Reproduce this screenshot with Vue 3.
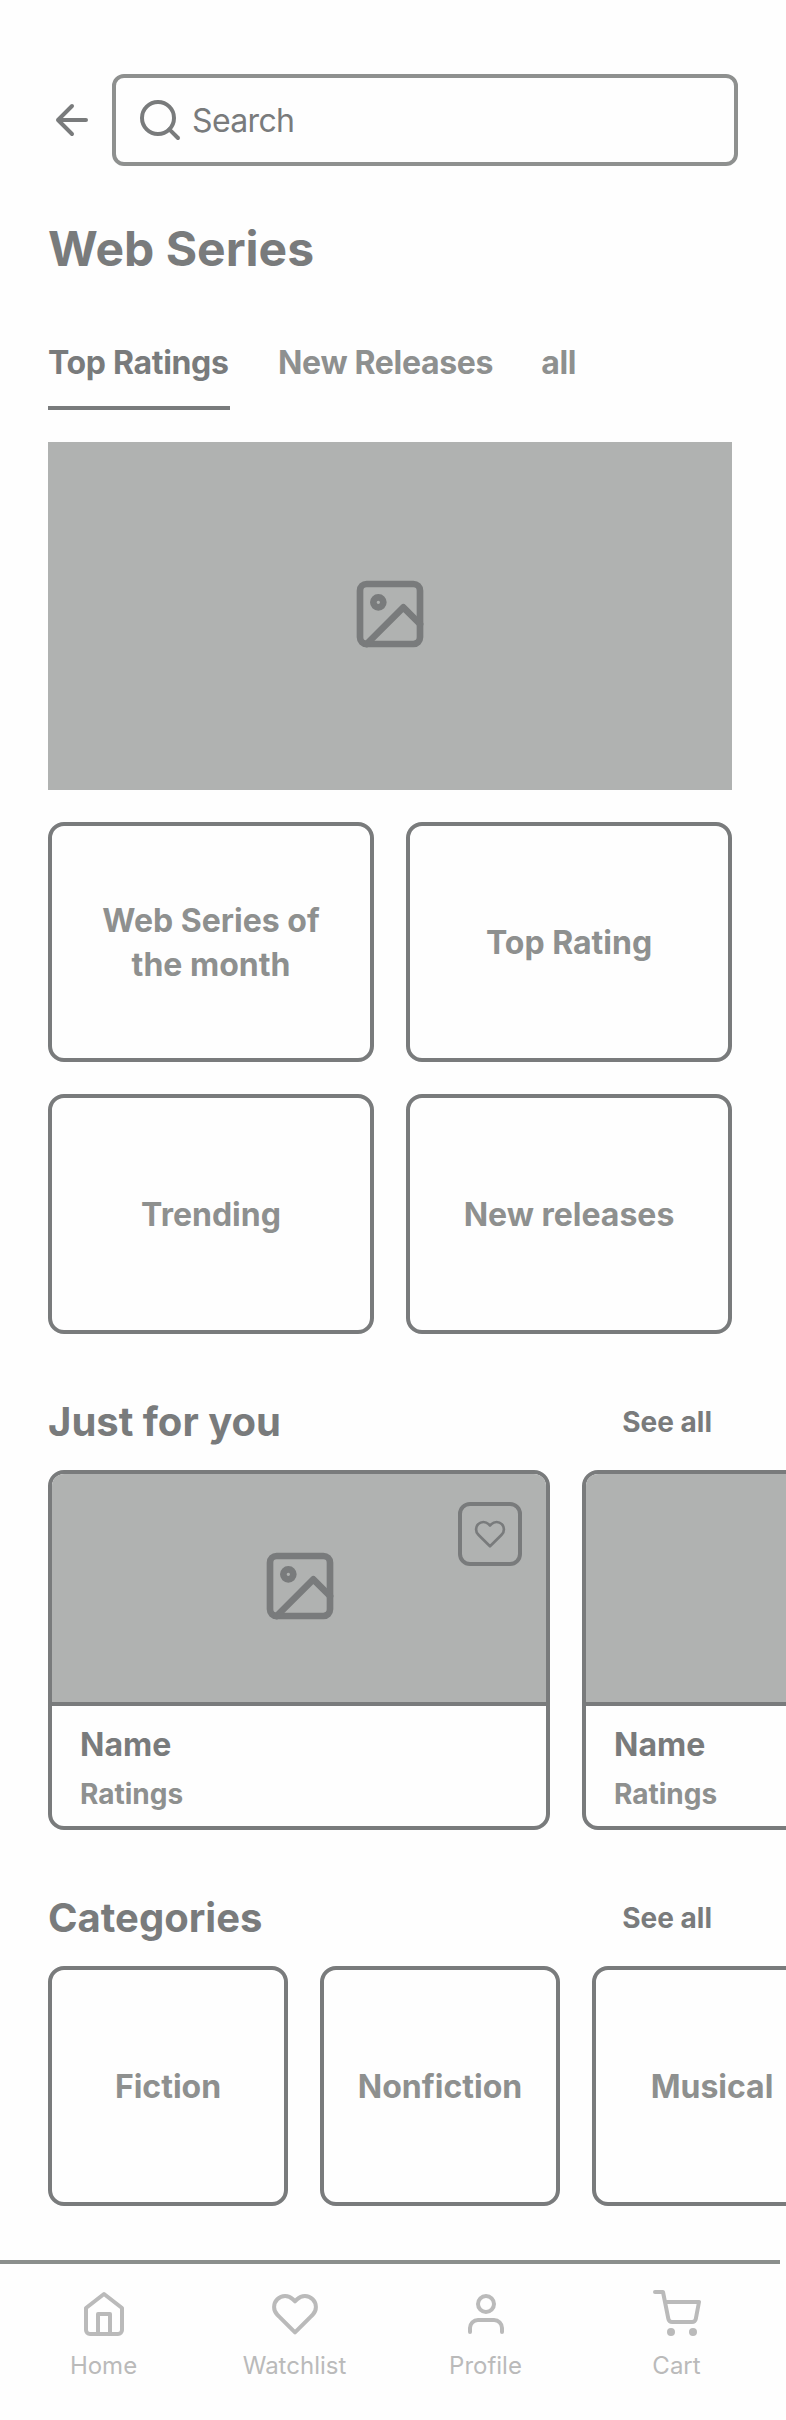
<script setup>
const tabs = ['Top Ratings', 'New Releases', 'all']
const tiles = ['Web Series of the month', 'Top Rating', 'Trending', 'New releases']
const shows = [
  { name: 'Name', meta: 'Ratings' },
  { name: 'Name', meta: 'Ratings' },
]
const categories = ['Fiction', 'Nonfiction', 'Musical']
const heart =
  'M20.84 4.61a5.5 5.5 0 0 0-7.78 0L12 5.67l-1.06-1.06a5.5 5.5 0 0 0-7.78 7.78l1.06 1.06L12 21.23l7.78-7.78 1.06-1.06a5.5 5.5 0 0 0 0-7.78z'
const nav = [
  { label: 'Home', paths: ['M3 9l9-7 9 7v11a2 2 0 0 1-2 2H5a2 2 0 0 1-2-2z', 'M9 22V12h6v10'], circles: [] },
  { label: 'Watchlist', paths: [heart], circles: [] },
  { label: 'Profile', paths: ['M20 21v-2a4 4 0 0 0-4-4H8a4 4 0 0 0-4 4v2'], circles: [[12, 7, 4]] },
  {
    label: 'Cart',
    paths: ['M1 1h4l2.68 13.39a2 2 0 0 0 2 1.61h9.72a2 2 0 0 0 2-1.61L23 6H6'],
    circles: [[9, 21, 1], [20, 21, 1]],
  },
]
</script>

<template>
  <div class="page">
    <header class="top">
      <svg class="icon i48" viewBox="0 0 24 24"><path d="M19 12H5M12 19l-7-7 7-7" /></svg>
      <div class="search">
        <svg class="icon i48" viewBox="0 0 24 24"><circle cx="11" cy="11" r="8" /><path d="M21 21l-4.35-4.35" /></svg>
        <span>Search</span>
      </div>
    </header>

    <h1 class="title">Web Series</h1>

    <nav class="tabs">
      <a v-for="(t, i) in tabs" :key="t" class="tab" :class="{ active: i === 0 }">{{ t }}</a>
    </nav>

    <div class="hero">
      <svg class="icon i80" viewBox="0 0 24 24">
        <rect x="3" y="3" width="18" height="18" rx="2" /><circle cx="8.5" cy="8.5" r="1.5" />
        <path d="M21 15l-5-5L5 21" />
      </svg>
    </div>

    <div class="tiles">
      <div v-for="t in tiles" :key="t" class="tile">{{ t }}</div>
    </div>

    <div class="section-head">
      <h2>Just for you</h2>
      <a>See all</a>
    </div>
    <div class="row">
      <article v-for="(s, i) in shows" :key="i" class="show">
        <div class="thumb">
          <svg class="icon i80" viewBox="0 0 24 24">
            <rect x="3" y="3" width="18" height="18" rx="2" /><circle cx="8.5" cy="8.5" r="1.5" />
            <path d="M21 15l-5-5L5 21" />
          </svg>
          <button class="fav">
            <svg class="icon i32" viewBox="0 0 24 24"><path :d="heart" /></svg>
          </button>
        </div>
        <div class="info">
          <div class="name">{{ s.name }}</div>
          <div class="meta">{{ s.meta }}</div>
        </div>
      </article>
    </div>

    <div class="section-head">
      <h2>Categories</h2>
      <a>See all</a>
    </div>
    <div class="row">
      <div v-for="c in categories" :key="c" class="tile square">{{ c }}</div>
    </div>

    <footer class="bottom">
      <a v-for="n in nav" :key="n.label" class="nav-item">
        <svg class="icon i48" viewBox="0 0 24 24">
          <path v-for="p in n.paths" :key="p" :d="p" />
          <circle v-for="c in n.circles" :key="c[0]" :cx="c[0]" :cy="c[1]" :r="c[2]" />
        </svg>
        <span>{{ n.label }}</span>
      </a>
    </footer>
  </div>
</template>

<style>
body {
  margin: 0;
  background: #fefefe;
}
</style>

<style scoped>
.page {
  width: 786px;
  height: 2420px;
  box-sizing: border-box;
  padding-top: 74px;
  overflow: hidden;
  background: #fefefe;
  color: #797b7c;
  font-family: Inter, 'Liberation Sans', sans-serif;
}
.page * {
  box-sizing: border-box;
}
.icon {
  display: block;
  flex: none;
  fill: none;
  stroke: currentColor;
  stroke-width: 2;
  stroke-linecap: round;
  stroke-linejoin: round;
}
.i32 { width: 32px; height: 32px; }
.i48 { width: 48px; height: 48px; }
.i80 { width: 80px; height: 80px; }
.top {
  display: flex;
  align-items: center;
  gap: 16px;
  padding: 0 48px;
}
.search {
  flex: none;
  display: flex;
  align-items: center;
  gap: 8px;
  width: 626px;
  height: 92px;
  padding-left: 20px;
  border: 4px solid #8e908f;
  border-radius: 12px;
  font-size: 32px;
  line-height: 44px;
  letter-spacing: -0.02em;
}
.search span {
  padding-top: 2px;
}
.title {
  margin: 53px 48px 0;
  font-size: 48px;
  line-height: 60px;
  font-weight: 700;
}
.tabs {
  display: flex;
  gap: 48px;
  margin: 62px 48px 0;
}
.tab {
  height: 69px;
  border-bottom: 4px solid transparent;
  font-size: 32px;
  line-height: 44px;
  font-weight: 700;
  letter-spacing: -0.01em;
  color: #8e908f;
}
.tab.active {
  min-width: 182px;
  color: #797b7c;
  border-color: #797b7c;
}
.hero {
  display: flex;
  align-items: center;
  justify-content: center;
  width: 684px;
  height: 348px;
  margin: 32px 0 0 48px;
  padding-bottom: 4px;
  background: #b0b2b1;
}
.tiles {
  display: grid;
  grid-template-columns: 326px 326px;
  gap: 32px;
  margin: 32px 0 0 48px;
}
.tile {
  display: flex;
  align-items: center;
  justify-content: center;
  height: 240px;
  padding: 2px 36px 0;
  border: 4px solid #797b7c;
  border-radius: 16px;
  text-align: center;
  font-size: 32px;
  line-height: 44px;
  font-weight: 700;
  color: #8e908f;
}
.square {
  flex: none;
  width: 240px;
  padding: 2px 0 0;
}
.section-head {
  display: flex;
  align-items: center;
  justify-content: space-between;
  height: 48px;
  margin: 64px 74px 24px 48px;
}
.section-head h2 {
  margin: 0;
  font-size: 40px;
  line-height: 48px;
  font-weight: 700;
}
.section-head a {
  font-size: 28px;
  line-height: 40px;
  font-weight: 700;
}
.row {
  display: flex;
  gap: 32px;
  padding-left: 48px;
  overflow: hidden;
}
.show {
  flex: none;
  width: 502px;
  height: 360px;
  border: 4px solid #797b7c;
  border-radius: 16px;
  overflow: hidden;
}
.thumb {
  position: relative;
  display: flex;
  justify-content: center;
  height: 232px;
  padding-top: 72px;
  padding-left: 2px;
  background: #b0b2b1;
  border-bottom: 4px solid #797b7c;
}
.fav {
  position: absolute;
  top: 28px;
  right: 24px;
  display: flex;
  align-items: center;
  justify-content: center;
  width: 64px;
  height: 64px;
  padding: 0;
  border: 4px solid #797b7c;
  border-radius: 12px;
  background: none;
  color: inherit;
}
.info {
  padding: 17px 28px 0;
  font-weight: 700;
}
.name {
  font-size: 32px;
  line-height: 44px;
}
.meta {
  margin-top: 7px;
  font-size: 28px;
  line-height: 40px;
  color: #8e908f;
}
.bottom {
  display: flex;
  width: 780px;
  height: 160px;
  margin-top: 54px;
  padding: 26px 8px 0;
  border-top: 4px solid #8b8f8d;
  color: #bababa;
}
.nav-item {
  flex: 1;
  display: flex;
  flex-direction: column;
  align-items: center;
  gap: 12px;
  font-size: 24px;
  line-height: 32px;
}
</style>
